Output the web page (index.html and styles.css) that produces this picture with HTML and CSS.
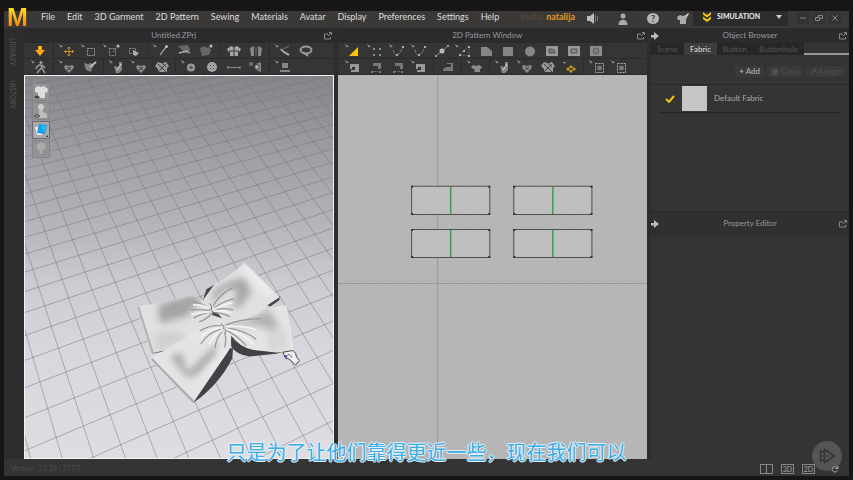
FILE: index.html
```html
<!DOCTYPE html>
<html lang="en">
<head>
    <meta charset="UTF-8">
    <title>Untitled.ZPrj</title>
    <link rel="stylesheet" href="styles.css">
</head>
<body>
<!-- icon set -->
<svg class="sprite" aria-hidden="true">
    <symbol id="mini" viewBox="0 0 6 6"><path d="M0 0l4 2.5-2.5 1z" fill="#888"/></symbol>
    <symbol id="i-down" viewBox="0 0 18 14"><path d="M7 2h4v4h3l-5 6-5-6h3z" fill="#fbab18"/></symbol>
    <symbol id="i-walk" viewBox="0 0 18 14"><use href="#mini" width="6" height="6"/><circle cx="10" cy="2.5" r="1.6" fill="#999"/><path d="M9.500 4.500L6 6.500 5 9M10 4.500l1 4 3 4.500M10.500 8L8 10.500 6 13M11 5l3 3" fill="none" stroke="#999" stroke-width="1.500"/></symbol>
    <symbol id="i-move" viewBox="0 0 18 14"><use href="#mini" width="6" height="6"/><path d="M10 3v9M5.500 7.500h9M8.500 4.500L10 3l1.500 1.500M8.500 10.500L10 12l1.500-1.500M7 6L5.500 7.500 7 9M13 6l1.500 1.500L13 9" fill="none" stroke="#c8901f"/></symbol>
    <symbol id="i-box" viewBox="0 0 18 14"><use href="#mini" width="6" height="6"/><path d="M6.500 4.500h7v7h-7z" fill="none" stroke="#999" stroke-dasharray="2 1"/></symbol>
    <symbol id="i-boxpt" viewBox="0 0 18 14"><use href="#mini" width="6" height="6"/><path d="M6.500 4.500h6v7h-6zM10 8l5-6" fill="none" stroke="#8b8b8b" stroke-dasharray="2 1"/><circle cx="15" cy="2" r="1.500" fill="#bbb"/></symbol>
    <symbol id="i-lasso" viewBox="0 0 18 14"><path d="M4.500 4.500h6v5h-6z" fill="none" stroke="#888" stroke-dasharray="2 1"/><path d="M8 6l6 3-3 3-3-1z" fill="#aaa"/></symbol>
    <symbol id="i-pin" viewBox="0 0 18 14"><use href="#mini" width="6" height="6"/><path d="M7 11l6-8" stroke="#999" stroke-width="1.300"/><circle cx="13.500" cy="2.500" r="1.500" fill="#bbb"/></symbol>
    <symbol id="i-fold" viewBox="0 0 18 14"><path d="M3 2l10-1 2 5-3 4-4-3z" fill="#696969"/><path d="M4 9l8-2M12 7l3 2" stroke="#aaa" stroke-width="1.500"/></symbol>
    <symbol id="i-cloth" viewBox="0 0 18 14"><path d="M3 4l4-2 3 2 2-1 2 3-2 5-7 1-1-4z" fill="#666"/><circle cx="14" cy="2" r="1.500" fill="#bbb"/></symbol>
    <symbol id="i-shirt" viewBox="0 0 18 14"><path d="M6 2l2 1h2l2-1 4 3-1.500 3-1.500-1v5H5V7L3.500 8 2 5z" fill="#a5a5a5"/><path d="M9 3v9M4 7h10" stroke="#383838"/></symbol>
    <symbol id="i-open" viewBox="0 0 18 14"><path d="M3 4l4-2v10H4zM15 4l-4-2v10h3z" fill="#858585"/><path d="M9 3v8" stroke="#777"/></symbol>
    <symbol id="i-brush" viewBox="0 0 18 14"><use href="#mini" width="6" height="6"/><path d="M6 5c1 3 4 3 8 6" fill="none" stroke="#aaa" stroke-width="2"/><path d="M8 5l6-3" stroke="#777"/></symbol>
    <symbol id="i-ring" viewBox="0 0 18 14"><ellipse cx="9" cy="6" rx="5.500" ry="3.500" fill="none" stroke="#999" stroke-width="2"/><path d="M6 8l5 4" stroke="#999" stroke-width="2"/></symbol>
    <symbol id="i-tee" viewBox="0 0 18 14"><use href="#mini" width="6" height="6"/><path d="M6 5l2 .8h2L12 5l3 2-1 2-1-.5V12H7.500V9L6 9 4 7z" fill="#8a8a8a"/></symbol>
    <symbol id="i-heart" viewBox="0 0 18 14"><use href="#mini" width="6" height="6"/><path d="M5 6l2-1 3 1 3-1 2 1-1 3-4 4-4-4z" fill="#8a8a8a"/><path d="M8 7l4 3M12 7l-4 3" stroke="#444"/></symbol>
    <symbol id="i-teepin" viewBox="0 0 18 14"><path d="M3 3l4 1 3-1 3 3-2 2-1 4-5-2z" fill="#808080"/><path d="M9 7l6-5" stroke="#bbb" stroke-width="2"/></symbol>
    <symbol id="i-hand" viewBox="0 0 18 14"><use href="#mini" width="6" height="6"/><path d="M5 6l5 1V2h3v8l-3 3H7z" fill="#858585"/><path d="M8 10l4-6" stroke="#ddd"/></symbol>
    <symbol id="i-check" viewBox="0 0 18 14"><path d="M5 2l3 1h2l3-1 3 4-2 2v4H5V9L2 6z" fill="#999"/><path d="M5 4l8 8M9 3l4 4M13 4l-8 8" stroke="#3c3c3c"/></symbol>
    <symbol id="i-btnm" viewBox="0 0 18 14"><use href="#mini" width="6" height="6"/><circle cx="10" cy="7.500" r="4" fill="#999"/><path d="M8 7.500h4M10 5.500v4" stroke="#444"/></symbol>
    <symbol id="i-btn" viewBox="0 0 18 14"><circle cx="9" cy="7" r="5" fill="#a5a5a5"/><path d="M7 5.500h1M10 5.500h1M7 8.500h1M10 8.500h1" stroke="#444"/></symbol>
    <symbol id="i-hole" viewBox="0 0 18 14"><path d="M3 7.500h12M3 6v3M15 6v3" stroke="#888" stroke-width="1.200"/></symbol>
    <symbol id="i-lock" viewBox="0 0 18 14"><path d="M2 2h4v4H2z" fill="#666"/><path d="M14 2v10l-5-2V4z" fill="#888"/><circle cx="10" cy="7" r="2.500" fill="#aaa" stroke="#444"/></symbol>
    <symbol id="i-stack" viewBox="0 0 18 14"><use href="#mini" width="6" height="6"/><path d="M7 3h6v5H7zM5 10h10v2H5z" fill="#858585"/></symbol>
    <symbol id="i-tri" viewBox="0 0 18 14"><use href="#mini" width="6" height="6"/><path d="M4 12l9-9v9z" fill="#f8c50c"/></symbol>
    <symbol id="i-pts" viewBox="0 0 18 14"><use href="#mini" width="6" height="6"/><path d="M6 4h2v2H6zM12 4h2v2h-2zM6 10h2v2H6zM12 10h2v2h-2z" fill="#888"/></symbol>
    <symbol id="i-curve" viewBox="0 0 18 14"><use href="#mini" width="6" height="6"/><path d="M4 6c2 8 6 6 10-3" fill="none" stroke="#888" stroke-dasharray="3 1"/><path d="M7 10h2v2H7zM13 2h2v2h-2z" fill="#aaa"/></symbol>
    <symbol id="i-split" viewBox="0 0 18 14"><path d="M3 12L15 2" stroke="#888"/><circle cx="9" cy="7" r="2.500" fill="#bbb"/><path d="M2 11h2v2H2zM14 1h2v2h-2z" fill="#999"/></symbol>
    <symbol id="i-trace" viewBox="0 0 18 14"><use href="#mini" width="6" height="6"/><path d="M5 11l4-5 5-4v10z" fill="none" stroke="#666" stroke-dasharray="2 1"/><path d="M4 10h2v2H4zM8 6h2v2H8zM13 2h2v2h-2zM13 11h2v2h-2z" fill="#aaa"/></symbol>
    <symbol id="i-poly" viewBox="0 0 18 14"><path d="M4 3h6l5 4v5H4z" fill="#858585"/></symbol>
    <symbol id="i-rect" viewBox="0 0 18 14"><path d="M4 3h10v9H4z" fill="#858585"/></symbol>
    <symbol id="i-circ" viewBox="0 0 18 14"><circle cx="9" cy="7.500" r="5" fill="#858585"/></symbol>
    <symbol id="i-ipoly" viewBox="0 0 18 14"><path d="M3 2h12v10H3z" fill="#999"/><path d="M6 5h3l3 2v2H6z" fill="#777" stroke="#555"/></symbol>
    <symbol id="i-irect" viewBox="0 0 18 14"><path d="M3 2h12v10H3z" fill="#999"/><path d="M6 5h6v4H6z" fill="#888" stroke="#555"/></symbol>
    <symbol id="i-icirc" viewBox="0 0 18 14"><path d="M3 2h12v10H3z" fill="#8d8d8d"/><circle cx="9" cy="7" r="3" fill="#808080" stroke="#5c5c5c"/></symbol>
    <symbol id="i-sew" viewBox="0 0 18 14"><use href="#mini" width="6" height="6"/><path d="M5 4h9v8H6v-2h4V7H7v2H5z" fill="#999"/></symbol>
    <symbol id="i-sewd" viewBox="0 0 18 14"><path d="M6 3h8v6h-3V6H6zM4 11h2v2H4zM12 11h2v2h-2z" fill="#777"/><path d="M6 11.500h6" stroke="#777" stroke-dasharray="1 1"/></symbol>
    <symbol id="i-iron" viewBox="0 0 18 14"><path d="M4 11c0-4 3-4 8-4V4H8V3h6v8z" fill="#777"/></symbol>
    <symbol id="i-gold" viewBox="0 0 18 14"><path d="M1 2h4l-1 2z" fill="#888"/><path d="M10 5l2 2-2 2-2-2zM7 7l2 2-2 2-2-2zM13 7l2 2-2 2-2-2zM10 9l2 2-2 2-2-2z" fill="#c8961c"/><circle cx="10" cy="9" r="1" fill="#353535"/></symbol>
    <symbol id="i-grid" viewBox="0 0 18 14"><use href="#mini" width="6" height="6"/><path d="M6.500 3.500h8v9h-8z" fill="none" stroke="#aaa" stroke-dasharray="2 1"/><circle cx="10.500" cy="8" r="2.500" fill="#777"/></symbol>
    <symbol id="i-pop" viewBox="0 0 8 8"><path d="M4 2H.5v5h6V5M4 4l3-3M5 .5h2.500V3" fill="none" stroke="#888"/></symbol>
    <symbol id="i-right" viewBox="0 0 8 8"><path d="M0 3h3V0l5 4-5 4V5.500H0z" fill="#bbb"/></symbol>
</svg>

<div class="app">
    <header class="topbar">
        <div class="logo">M</div>
        <nav class="menu">
            <a href="#">File</a>
            <a href="#">Edit</a>
            <a href="#">3D Garment</a>
            <a href="#">2D Pattern</a>
            <a href="#">Sewing</a>
            <a href="#">Materials</a>
            <a href="#">Avatar</a>
            <a href="#">Display</a>
            <a href="#">Preferences</a>
            <a href="#">Settings</a>
            <a href="#">Help</a>
        </nav>
        <div class="user"><span>Hello,</span> <b>natalija</b></div>
        <div class="top_icons">
            <button aria-label="News"><svg viewBox="0 0 14 14"><path d="M1 4h3l4-3v11L4 9H1z" fill="#bbb"/><path d="M9.500 3v7M11.500 4v5" stroke="#777"/></svg></button>
            <button aria-label="Account"><svg viewBox="0 0 14 14"><circle cx="7" cy="4" r="2.500" fill="#aaa"/><path d="M2.500 13c0-7 9-7 9 0z" fill="#aaa"/></svg></button>
            <button class="help" aria-label="Help center"><span>?</span></button>
            <button aria-label="Garment"><svg viewBox="0 0 14 14"><path d="M1 5l3-2 3 1 3-1 1 2-1 3v4H4V8L2 8z" fill="#aaa"/><path d="M9 4l3-3 1 1-2 3z" fill="#ccc"/></svg></button>
        </div>
        <button class="mode">
            <svg viewBox="0 0 10 10"><path d="M1 0l4 3 4-3v2.500L5 5.500 1 2.500zM1 4.500l4 3 4-3V7l-4 3-4-3z" fill="#f5c518"/></svg>
            <span>SIMULATION</span>
            <i></i>
        </button>
        <div class="win_btns">
            <button aria-label="Minimize"><svg viewBox="0 0 8 8"><path d="M1 4h6" stroke="#888"/></svg></button>
            <button aria-label="Restore"><svg viewBox="0 0 8 8"><path d="M.5 3.500h4v3h-4zM3 3V1.500h4.500v3H5" fill="none" stroke="#888"/></svg></button>
            <button aria-label="Close"><svg viewBox="0 0 8 8"><path d="M1.500 1.500l5 5M6.500 1.500l-5 5" stroke="#888"/></svg></button>
        </div>
    </header>

    <main class="work">
        <aside class="side">
            <a href="#">LIBRARY</a>
            <a href="#">HISTORY</a>
        </aside>

        <section class="panel">
            <h2 class="title"><span>Untitled.ZPrj</span><svg class="pop"><use href="#i-pop"/></svg></h2>
            <div class="tools">
                <button aria-label="Simulate"><svg><use href="#i-down"/></svg></button><hr>
                <button aria-label="Select/Move"><svg><use href="#i-move"/></svg></button>
                <button aria-label="Select mesh"><svg><use href="#i-box"/></svg></button>
                <button aria-label="Select mesh point"><svg><use href="#i-boxpt"/></svg></button>
                <button aria-label="Lasso"><svg><use href="#i-lasso"/></svg></button><hr>
                <button aria-label="Pin"><svg><use href="#i-pin"/></svg></button>
                <button aria-label="Fold"><svg><use href="#i-fold"/></svg></button>
                <button aria-label="Fold angle"><svg><use href="#i-cloth"/></svg></button><hr>
                <button aria-label="Arrange"><svg><use href="#i-shirt"/></svg></button>
                <button aria-label="Reset arrangement"><svg><use href="#i-open"/></svg></button><hr>
                <button aria-label="Brush"><svg><use href="#i-brush"/></svg></button>
                <button aria-label="Tape"><svg><use href="#i-ring"/></svg></button>
            </div>
            <div class="tools">
                <button aria-label="Avatar pose"><svg><use href="#i-walk"/></svg></button><hr>
                <button aria-label="Edit sewing"><svg><use href="#i-heart"/></svg></button>
                <button aria-label="Segment sewing"><svg><use href="#i-teepin"/></svg></button><hr>
                <button aria-label="Edit texture"><svg><use href="#i-hand"/></svg></button>
                <button aria-label="Edit graphic"><svg><use href="#i-heart"/></svg></button>
                <button aria-label="Graphic"><svg><use href="#i-check"/></svg></button><hr>
                <button aria-label="Move button"><svg><use href="#i-btnm"/></svg></button>
                <button aria-label="Button"><svg><use href="#i-btn"/></svg></button>
                <button aria-label="Buttonhole"><svg><use href="#i-hole"/></svg></button>
                <button aria-label="Fasten button"><svg><use href="#i-lock"/></svg></button><hr>
                <button aria-label="Zipper"><svg><use href="#i-stack"/></svg></button>
            </div>
            <div class="view view3d">
                <svg class="scene" viewBox="25 75 308 384" preserveAspectRatio="xMidYMid slice" role="img" aria-label="Bow garment">
                    <defs>
                        <filter id="soft" x="-20%" y="-20%" width="140%" height="140%"><feGaussianBlur stdDeviation="11"/></filter>
                        <filter id="soft2" x="-20%" y="-20%" width="140%" height="140%"><feGaussianBlur stdDeviation="2"/></filter>
                        <clipPath id="c1"><path d="M50 170L130 157 205 138Q230 138 250 150L285 102Q330 80 375 38L480 142 440 168 400 260 230 290 145 300 95 310Q75 250 50 170z"/></clipPath>
                        <clipPath id="c2"><path d="M90 325Q160 290 230 240L305 218Q380 215 440 175L500 165Q520 230 527 305L470 308 400 300Q365 290 335 255 335 290 325 305L220 460z"/></clipPath>
                    </defs>
                    <path id="floor" fill="none" stroke="#74747e" stroke-width="1" opacity=".5"/>
                    <g transform="translate(120 250) scale(.3333)">
                        <path d="M92 300l6 11 50-9-5-8zM250 150l10-32 35-20-15 50zM436 162l44-24v12l-28 20z" fill="#444548"/>
                        <path d="M50 170L130 157 205 138Q230 138 250 150L285 102Q330 80 375 38L480 142 440 168 400 260 230 290 145 300 95 310Q75 250 50 170z" fill="#e0e0e0"/>
                        <g clip-path="url(#c1)">
                            <g filter="url(#soft)">
                                <path d="M115 165l110-35 20 20-45 50-80 20z" fill="#a4a4a4"/>
                                <path d="M280 125q40-35 95-40l20 45-40 45-20-10q30-35 5-50-30-5-60 50z" fill="#a6a6a6"/>
                                <path d="M105 250l60-5 40 20-95 40z" fill="#cfcfcf"/>
                                <path d="M375 50l85 90" stroke="#eee" stroke-width="25"/>
                            </g>
                            <path d="M55 170l44 140" stroke="#b5b5b5" stroke-width="7" filter="url(#soft2)"/>
                            <g fill="none" filter="url(#soft2)">
                                <path d="M272 178q-30-22-55-22M270 182q-30-5-58-2M272 186q-25 5-50 18M276 190q-14 18-38 26M280 168q20-35 60-55M284 174q30-22 60-28M286 180q25-8 55 0M286 188q20 0 45 12" stroke="#9a9a9a" stroke-width="4"/>
                                <path d="M270 175q-30-12-50-10M270 186q-25 0-55 8M284 178q30-16 55-20M284 184q25-4 50 5" stroke="#f4f4f4" stroke-width="5"/>
                            </g>
                            <path d="M277 195l30 10-10-12-18-8z" fill="#444"/>
                            <path d="M270 160q10 10 4 20l14 14" fill="none" stroke="#777" stroke-width="3"/>
                        </g>
                        <path d="M333 255Q360 292 400 300L505 303 470 312 390 320Q350 315 335 290zM340 295l-2 30q-40 80-118 135l-3-12Q290 360 330 295z" fill="#414245"/>
                        <path d="M90 325Q160 290 230 240L305 218Q380 215 440 175L500 165Q520 230 527 305L470 308 400 300Q365 290 335 255 335 290 325 305L220 460z" fill="#e4e4e4"/>
                        <g clip-path="url(#c2)">
                            <g filter="url(#soft)">
                                <path d="M320 216q80 0 125-40l35 55-25 12q-40-25-130-15z" fill="#b2b2b2"/>
                                <path d="M155 325q20-25 35-5 0 35 20 45 25-30 85-85l-10 50q-60 60-85 50z" fill="#a6a6a6"/>
                                <path d="M455 230l5 75M485 240l5 60" stroke="#c6c6c6" stroke-width="12"/>
                                <path d="M250 370l65-70" stroke="#f3f3f3" stroke-width="15"/>
                            </g>
                            <path d="M95 328l125 128" stroke="#aaa" stroke-width="8" filter="url(#soft2)"/>
                            <g fill="none" filter="url(#soft2)">
                                <path d="M305 228q-30-5-65 15M303 238q-35 8-60 45M308 244q-18 18-22 50M315 248q6 20 0 45M320 240q35 20 60 48M320 234q55 6 90 35M318 226q40-18 105-20" stroke="#9a9a9a" stroke-width="4"/>
                                <path d="M304 233q-35 5-60 28M306 243q-26 15-38 40M320 237q50 14 80 45M320 230q50-4 90 10" stroke="#f5f5f5" stroke-width="5"/>
                            </g>
                            <path d="M303 222q14 6 8 14 12 4 5 14" fill="none" stroke="#777" stroke-width="3"/>
                        </g>
                        <path d="M502 168q16 65 23 134" fill="none" stroke="#c2c2c2" stroke-width="2"/>
                        <path d="M490 307l30-5 8 8q0 12 12 22l-12 14-18-18-12-3z" fill="#eee" stroke="#444" stroke-width="3"/>
                        <path d="M503 316q10-6 14 8" fill="none" stroke="#333" stroke-width="2"/>
                        <circle cx="499" cy="320" r="4" fill="#3434c8"/>
                    </g>
                </svg>
                <div class="view_btns">
                    <button aria-label="Show garment"><svg viewBox="0 0 16 16"><path d="M5 2l3 1 3-1 4 3-1 4-2-1v6H5V9L2 8V4z" fill="#ddd"/><path d="M1 13q3-3 6 0-3 3-6 0z" fill="#444"/></svg></button>
                    <button aria-label="Show avatar"><svg viewBox="0 0 16 16"><circle cx="8" cy="4" r="3" fill="#ccc"/><path d="M6 7h4v2l4 2v4H6z" fill="#bfbfbf"/><path d="M1 13q3-3 6 0-3 3-6 0z" fill="none" stroke="#555"/></svg></button>
                    <button class="on" aria-label="Surface"><svg viewBox="0 0 16 16"><path d="M2 5h7v8H4z" fill="#f5e9f3"/><path d="M6 2l8 1-2 9-8-1z" fill="#17a0e8"/><path d="M8 3l5 1-2 6z" fill="#2bbaf8"/><path d="M13 15h2v-2z" fill="#222"/></svg></button>
                    <button aria-label="Avatar surface"><svg viewBox="0 0 16 16"><path d="M4 3q4-3 8 0v5l-3 2v3H7v-3L4 8z" fill="#aaa"/></svg></button>
                </div>
            </div>
        </section>

        <section class="panel">
            <h2 class="title"><span>2D Pattern Window</span><svg class="pop"><use href="#i-pop"/></svg></h2>
            <div class="tools">
                <button aria-label="Transform pattern"><svg><use href="#i-tri"/></svg></button>
                <button aria-label="Edit pattern"><svg><use href="#i-pts"/></svg></button>
                <button aria-label="Edit curvature"><svg><use href="#i-curve"/></svg></button>
                <button aria-label="Edit curve point"><svg><use href="#i-curve"/></svg></button>
                <button aria-label="Add point"><svg><use href="#i-split"/></svg></button>
                <button aria-label="Trace"><svg><use href="#i-trace"/></svg></button>
                <button aria-label="Polygon"><svg><use href="#i-poly"/></svg></button>
                <button aria-label="Rectangle"><svg><use href="#i-rect"/></svg></button>
                <button aria-label="Circle"><svg><use href="#i-circ"/></svg></button>
                <button aria-label="Internal polygon"><svg><use href="#i-ipoly"/></svg></button>
                <button aria-label="Internal rectangle"><svg><use href="#i-irect"/></svg></button>
                <button aria-label="Internal circle"><svg><use href="#i-icirc"/></svg></button>
            </div>
            <div class="tools">
                <button aria-label="Edit sewing line"><svg><use href="#i-sew"/></svg></button>
                <button aria-label="Segment sewing line"><svg><use href="#i-sewd"/></svg></button>
                <button aria-label="Free sewing"><svg><use href="#i-sewd"/></svg></button>
                <button aria-label="Show sewing"><svg><use href="#i-sew"/></svg></button><hr>
                <button aria-label="Steam"><svg><use href="#i-iron"/></svg></button><hr>
                <button aria-label="Show garment fit"><svg><use href="#i-tee"/></svg></button><hr>
                <button aria-label="Edit pattern texture"><svg><use href="#i-hand"/></svg></button>
                <button aria-label="Transform graphic"><svg><use href="#i-heart"/></svg></button>
                <button aria-label="Add graphic"><svg><use href="#i-check"/></svg></button>
                <button aria-label="Topstitch"><svg><use href="#i-gold"/></svg></button><hr>
                <button aria-label="Grading"><svg><use href="#i-grid"/></svg></button>
                <button aria-label="Edit grading"><svg><use href="#i-grid"/></svg></button>
            </div>
            <div class="view view2d">
                <svg class="scene" viewBox="338 75 309 384" preserveAspectRatio="xMidYMid slice" role="img" aria-label="Four pattern pieces">
                    <defs>
                        <pattern id="sq" width="15" height="15" x="437" y="283" patternUnits="userSpaceOnUse"><path d="M.5 0v15M0 .5h15" stroke="#b2b2b2" stroke-width="1"/></pattern>
                        <g id="piece">
                            <path d="M.5.5h78v28H.5z" fill="#bfbfbf" stroke="#505050"/>
                            <path d="M39.500 1v27" stroke="#2fa050" stroke-width="1.500"/>
                            <path d="M0 0h2v2H0zM77 0h2v2h-2zM0 27h2v2H0zM77 27h2v2h-2z" fill="#333"/>
                        </g>
                    </defs>
                    <rect x="0" y="0" width="900" height="600" fill="url(#sq)"/>
                    <path d="M437.500 0v600M0 283.500h900" stroke="#989898"/>
                    <use href="#piece" x="411" y="186"/>
                    <use href="#piece" x="513" y="186"/>
                    <use href="#piece" x="411" y="229"/>
                    <use href="#piece" x="513" y="229"/>
                </svg>
            </div>
        </section>

        <aside class="props">
            <section class="browser">
                <h2 class="title"><svg class="arrow"><use href="#i-right"/></svg><span>Object Browser</span><svg class="pop"><use href="#i-pop"/></svg></h2>
                <div class="tabs">
                    <button>Scene</button>
                    <button class="active">Fabric</button>
                    <button>Button</button>
                    <button>Buttonhole</button>
                </div>
                <div class="actions">
                    <button class="add"><b>+</b> Add</button>
                    <button disabled><b>▦</b> Copy</button>
                    <button disabled><b>↗</b> Assign</button>
                </div>
                <ul class="fabrics">
                    <li>
                        <svg class="tick" viewBox="0 0 10 8"><path d="M1 4l3 3 5-6" fill="none" stroke="#f2c40f" stroke-width="2"/></svg>
                        <span class="swatch"></span>
                        <span>Default Fabric</span>
                    </li>
                </ul>
            </section>
            <section class="editor">
                <h2 class="title"><svg class="arrow"><use href="#i-right"/></svg><span>Property Editor</span><svg class="pop"><use href="#i-pop"/></svg></h2>
            </section>
        </aside>
    </main>

    <footer class="status">
        <span class="version">Version: 3.1.28 ( 7177)</span>
        <button aria-label="Split view"><i></i></button>
        <button>3D</button>
        <button>2D</button>
        <button class="reset" aria-label="Reset view"><svg viewBox="0 0 8 8"><path d="M6.500 3A2.800 2.800 0 1 0 6.500 5.500M7 1v2.500H4.500" fill="none" stroke="#aaa"/></svg></button>
    </footer>
</div>

<div class="watermark"><svg viewBox="0 0 30 30"><circle cx="15" cy="15" r="15" fill="#888" opacity=".4"/><path d="M8.500 9.500v11l4-2.500v-6zM12.500 8.500l10 6.500-10 6.500z" fill="none" stroke="#353535" stroke-width="1.500"/><path d="M9 15h8" stroke="#353535"/></svg></div>
<p class="subtitle" lang="zh">只是为了让他们靠得更近一些，现在我们可以</p>
<script src="script.js"></script>
</body>
</html>
```

FILE: styles.css
```css
*{
    box-sizing: border-box;
}
body{
    margin: 0;
    height: 100vh;
    padding: 4px;
    position: relative;
    overflow: hidden;
    background-color: #171515;
    color: #aaa;
    font: 9px/11px Lato, "Liberation Sans", sans-serif;
}
button{
    padding: 0;
    border: 0;
    background: none;
    color: inherit;
    font: inherit;
}
a{
    color: inherit;
    text-decoration: none;
}
svg{
    display: block;
}
.sprite{
    position: absolute;
    width: 0;
    height: 0;
}
.app{
    height: 100%;
    display: flex;
    flex-direction: column;
    border-top: 7px solid #171515;
    background-color: #2e2d2e;
}
.topbar{
    height: 17px;
    flex: none;
    display: flex;
    align-items: flex-start;
    background-color: #3a3938;
}
.logo{
    width: 37px;
    flex: none;
    padding-left: 3px;
    margin-top: -8px;
    font: bold 25px/28px "Liberation Sans", sans-serif;
    color: transparent;
    background: linear-gradient(#fddc2c 20%, #f18a14 80%);
    -webkit-background-clip: text;
    background-clip: text;
}
.menu{
    display: flex;
    gap: 12px;
    flex: 1;
    color: #dcdcdc;
    white-space: nowrap;
}
.user{
    margin-right: 11px;
    color: #e09a22;
    white-space: nowrap;
}
.user span{
    color: #5c4c38;
}
.top_icons{
    display: flex;
    gap: 16px;
    margin-right: 3px;
}
.top_icons svg{
    width: 14px;
    height: 14px;
}
.help span{
    display: block;
    width: 12px;
    margin: 2px 1px;
    border-radius: 50%;
    background-color: #b5b5b5;
    color: #333;
    font-weight: bold;
}
.mode{
    display: flex;
    align-items: center;
    gap: 5px;
    height: 11px;
    width: 95px;
    padding: 0 6px 0 9px;
    background-color: #2c2c2c;
    color: #eee;
    font-size: 7px;
    font-weight: bold;
    box-shadow: 0 4px #2c2c2c;
}
.mode svg{
    width: 10px;
    height: 10px;
    flex: none;
}
.mode i{
    margin-left: auto;
    border: 3px solid transparent;
    border-top: 4px solid #ccc;
    border-bottom: 0;
}
.win_btns{
    display: flex;
    gap: 4px;
    padding: 1px 8px 0 9px;
}
.win_btns button{
    padding: 2px;
    background-color: #333;
}
.win_btns svg{
    width: 8px;
    height: 8px;
}
.work{
    flex: 1;
    min-height: 0;
    display: flex;
    gap: 4px;
}
.side{
    width: 16px;
    flex: none;
    display: flex;
    flex-direction: column;
    gap: 14px;
    padding: 10px 2px;
    color: #555557;
    font-size: 7px;
}
.side a{
    writing-mode: vertical-rl;
}
.panel{
    flex: 1;
    min-width: 0;
    display: flex;
    flex-direction: column;
}
.title{
    flex: none;
    display: flex;
    align-items: center;
    height: 15px;
    margin: 0;
    background-color: #2b2b2e;
    color: #999;
    font-size: 8px;
    font-weight: normal;
}
.title span{
    flex: 1;
    text-align: center;
}
.title svg{
    width: 8px;
    height: 8px;
    margin-right: 2px;
}
.tools{
    flex: none;
    display: flex;
    align-items: center;
    height: 16px;
    padding-left: 5px;
    border-bottom: 1px solid #2b2b2b;
    background-color: #353535;
}
.tools button{
    width: 22px;
    padding: 0 2px;
}
.tools svg{
    width: 18px;
    height: 14px;
}
.tools hr{
    width: 1px;
    height: 16px;
    margin: 0 3px 0 2px;
    border: 0;
    background-color: #2a2a2a;
}
.view{
    flex: 1;
    min-height: 0;
    position: relative;
}
.scene{
    width: 100%;
    height: 100%;
}
.view3d{
    border: 1px solid #f2f2f2;
    background: linear-gradient(#84868a, #9d9da3 20%, #b4b3ba 38%, #cbcbd1 54%, #d8d7dd 72%, #dfdde2);
}
.view2d{
    background-color: #b6b6b6;
}
.view_btns{
    position: absolute;
    top: 7px;
    left: 7px;
    display: grid;
    gap: 1px;
}
.view_btns button{
    width: 18px;
    height: 18px;
    border: 1px solid #858588;
    background-color: #939396;
}
.view_btns svg{
    width: 16px;
    height: 16px;
}
.view_btns .on{
    border-color: #6b6b6e;
    background-color: #a9a9ad;
}
.props{
    width: 198px;
    flex: none;
    display: flex;
    flex-direction: column;
    background-color: #343434;
}
.browser{
    flex: 1;
}
.editor{
    flex: 1.35;
    border-top: 1px solid #272727;
}
.editor .title{
    height: 24px;
    background-color: #303030;
}
.tabs{
    display: flex;
    height: 12px;
    color: #555;
    font-size: 8px;
    line-height: 10px;
}
.tabs button{
    padding: 0 6px;
    background-color: #272727;
}
.tabs .active{
    background-color: #3d3d3d;
    color: #ddd;
}
.tabs::after{
    content: "";
    flex: 1;
    border-bottom: 2px solid #999;
}
.actions{
    display: flex;
    justify-content: flex-end;
    gap: 3px;
    padding: 11px 4px 7px;
    color: #505050;
    font-size: 8px;
}
.actions button{
    padding: 0 4px;
    background-color: #3a3a3a;
}
.actions .add{
    color: #bbb;
}
.fabrics{
    margin: 0;
    padding: 0;
    border-top: 1px solid #292929;
    list-style: none;
    font-size: 8px;
}
.fabrics li{
    display: flex;
    align-items: center;
    gap: 7px;
    height: 28px;
    margin: 0 9px;
    padding-left: 5px;
    border-bottom: 1px solid #242424;
}
.tick{
    width: 10px;
    height: 8px;
}
.swatch{
    width: 25px;
    height: 25px;
    background-color: #c5c5c5;
}
.status{
    flex: none;
    display: flex;
    align-items: center;
    gap: 8px;
    height: 17px;
    padding: 2px 10px 0 7px;
    background-color: #343434;
    font-size: 7px;
}
.version{
    flex: 1;
    color: #4d4d4d;
}
.status button{
    width: 13px;
    height: 10px;
    border: 1px solid #888;
    line-height: 8px;
}
.status button i{
    display: block;
    width: 1px;
    height: 8px;
    margin: 0 auto;
    background-color: #888;
}
.status .reset{
    margin-left: 8px;
    width: 8px;
    border: 0;
}
.watermark{
    position: absolute;
    right: 11px;
    bottom: 9px;
    width: 30px;
}
.subtitle{
    position: absolute;
    left: 0;
    right: 0;
    bottom: 13px;
    margin: 0;
    text-align: center;
    color: #3fabe4;
    font: 20px/30px "Noto Sans CJK SC", sans-serif;
    text-shadow: 1px 0 #e4f3fb, -1px 0 #e4f3fb, 0 1px #e4f3fb, 0 -1px #e4f3fb;
}
```

FILE: script.js
```javascript
// floor grid in perspective, one vanishing point for each line family
const leftVp = {x: -223, y: -524};
const rightVp = {x: 1625, y: -222};
let d = '';
for (let i = -4; i < 24; i++) {
    let x = 51 + i * 30.5;
    let t = (500 - leftVp.y) / (420 - leftVp.y);
    d += 'M' + leftVp.x + ' ' + leftVp.y + 'L' + (leftVp.x + (x - leftVp.x) * t) + ' 500';
}
for (let k = -7; k < 40; k++) {
    let y = 1 / (0.001563 + k * 0.0000769) + rightVp.y;
    d += 'M25 ' + y + 'L' + rightVp.x + ' ' + rightVp.y;
}
document.getElementById('floor').setAttribute('d', d);
```
